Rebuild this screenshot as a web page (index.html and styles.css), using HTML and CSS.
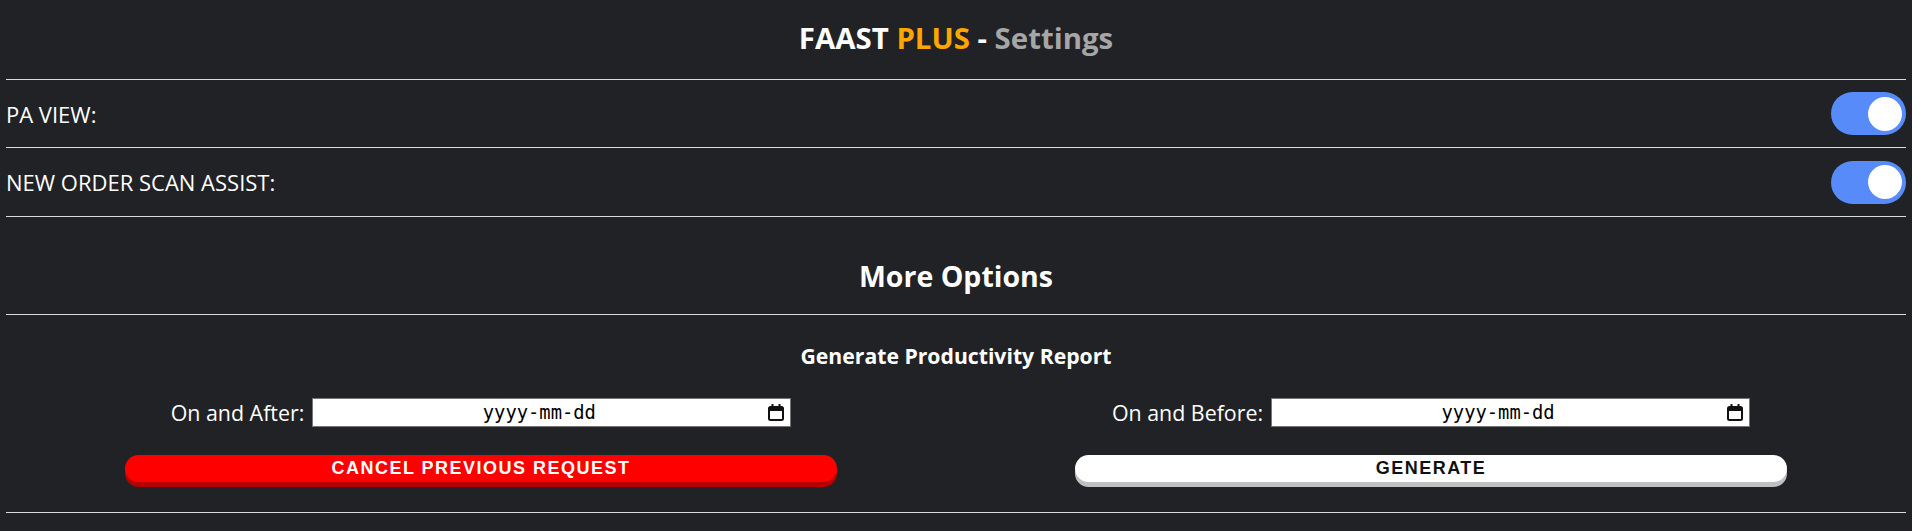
FILE: index.html
```html
<!DOCTYPE html>
<html lang="en">
<head>
<meta charset="utf-8">
<title>FAAST PLUS - Settings</title>
<link rel="stylesheet" href="styles.css">
</head>
<body>
<div class="page">
  <header class="title-bar">
    <h1 class="title"><span class="t-white">FAAST</span> <span class="t-orange">PLUS</span> <span class="t-white">-</span> <span class="t-gray">Settings</span></h1>
  </header>

  <div class="setting-row row-1">
    <span class="setting-label">PA VIEW:</span>
    <span class="toggle"><span class="knob"></span></span>
  </div>
  <div class="setting-row row-2">
    <span class="setting-label">NEW ORDER SCAN ASSIST:</span>
    <span class="toggle"><span class="knob"></span></span>
  </div>

  <section class="section-head">
    <h2 class="section-title">More Options</h2>
  </section>

  <section class="report">
    <h3 class="report-title">Generate Productivity Report</h3>
    <div class="report-grid">
      <div class="col">
        <div class="date-row">
          <span class="date-label">On and After:</span>
          <div class="date-field">
            <input class="date-input" type="text" placeholder="yyyy-mm-dd">
            <svg class="cal" width="16" height="17" viewBox="0 0 16 17" aria-hidden="true">
              <rect x="1" y="3" width="14" height="13" rx="1.5" fill="none" stroke="#111" stroke-width="2"/>
              <rect x="1" y="3" width="14" height="4" fill="#111"/>
              <rect x="3.5" y="0" width="2" height="3.5" fill="#111"/>
              <rect x="10.5" y="0" width="2" height="3.5" fill="#111"/>
            </svg>
          </div>
        </div>
        <button class="btn btn-red" type="button">CANCEL PREVIOUS REQUEST</button>
      </div>
      <div class="col">
        <div class="date-row">
          <span class="date-label">On and Before:</span>
          <div class="date-field">
            <input class="date-input" type="text" placeholder="yyyy-mm-dd">
            <svg class="cal" width="16" height="17" viewBox="0 0 16 17" aria-hidden="true">
              <rect x="1" y="3" width="14" height="13" rx="1.5" fill="none" stroke="#111" stroke-width="2"/>
              <rect x="1" y="3" width="14" height="4" fill="#111"/>
              <rect x="3.5" y="0" width="2" height="3.5" fill="#111"/>
              <rect x="10.5" y="0" width="2" height="3.5" fill="#111"/>
            </svg>
          </div>
        </div>
        <button class="btn btn-white" type="button">GENERATE</button>
      </div>
    </div>
  </section>
</div>
</body>
</html>
```

FILE: styles.css
```css
* { box-sizing: border-box; }

html, body {
  margin: 0;
  padding: 0;
  background: #212226;
}

body {
  font-family: "Open Sans", "Noto Sans", sans-serif;
  color: #ffffff;
  height: 531px;
  overflow: hidden;
}

.page {
  padding: 0 6px;
}

.title-bar {
  padding: 18px 0 21px;
  border-bottom: 1px solid #dcdcdc;
}

.title {
  margin: 0;
  text-align: center;
  font-size: 29.4px;
  line-height: 40px;
  font-weight: 700;
}

.t-white { color: #ffffff; }
.t-orange { color: #ffa500; }
.t-gray { color: #a6a6a6; }

.setting-row {
  display: flex;
  align-items: center;
  justify-content: space-between;
  border-bottom: 1px solid #dcdcdc;
}

.row-1 { height: 68px; }
.row-2 { height: 69px; }

.setting-label {
  font-size: 22px;
  line-height: 30px;
}

.toggle {
  display: flex;
  align-items: center;
  justify-content: flex-end;
  width: 75px;
  height: 43px;
  padding: 0 4px;
  border-radius: 22px;
  background: #578bfa;
}

.knob {
  width: 34px;
  height: 34px;
  border-radius: 50%;
  background: #ffffff;
}

.section-head {
  padding: 39px 0 18px;
  border-bottom: 1px solid #dcdcdc;
}

.section-title {
  margin: 0;
  text-align: center;
  font-size: 28.5px;
  line-height: 40px;
  font-weight: 700;
}

.report {
  padding: 27px 0 30px;
  border-bottom: 1px solid #dcdcdc;
}

.report-title {
  margin: 0 0 29px;
  text-align: center;
  font-size: 21.2px;
  line-height: 27px;
  font-weight: 700;
}

.report-grid {
  display: grid;
  grid-template-columns: 1fr 1fr;
}

.col {
  display: flex;
  flex-direction: column;
  align-items: center;
  gap: 28px;
}

.date-row {
  display: flex;
  align-items: center;
  gap: 8px;
}

.date-label {
  font-size: 21.4px;
  line-height: 29px;
}

.date-field {
  display: flex;
  align-items: center;
  width: 479px;
  height: 29px;
  padding: 0 6px 0 1px;
  background: #ffffff;
  border: 1px solid #767676;
}

.date-input {
  flex: 1;
  min-width: 0;
  height: 100%;
  border: 0;
  padding: 0;
  outline: none;
  background: transparent;
  text-align: center;
  font-family: "DejaVu Sans Mono", "Liberation Mono", monospace;
  font-size: 18.8px;
  color: #000;
}

.date-input::placeholder {
  color: #000;
  opacity: 1;
}

.cal {
  flex: none;
  margin-left: 4px;
}

.btn {
  width: 712px;
  height: 27px;
  border: 0;
  border-radius: 14px;
  padding: 0;
  font-family: "Liberation Sans", Arial, sans-serif;
  font-weight: 700;
  font-size: 18px;
  letter-spacing: 1.5px;
  line-height: 27px;
  cursor: pointer;
}

.btn-red {
  background: #ff0000;
  color: #ffffff;
  box-shadow: 0 5px 0 #b50000;
}

.btn-white {
  background: #ffffff;
  color: #111111;
  box-shadow: 0 5px 0 #c0c0c0;
}
```
